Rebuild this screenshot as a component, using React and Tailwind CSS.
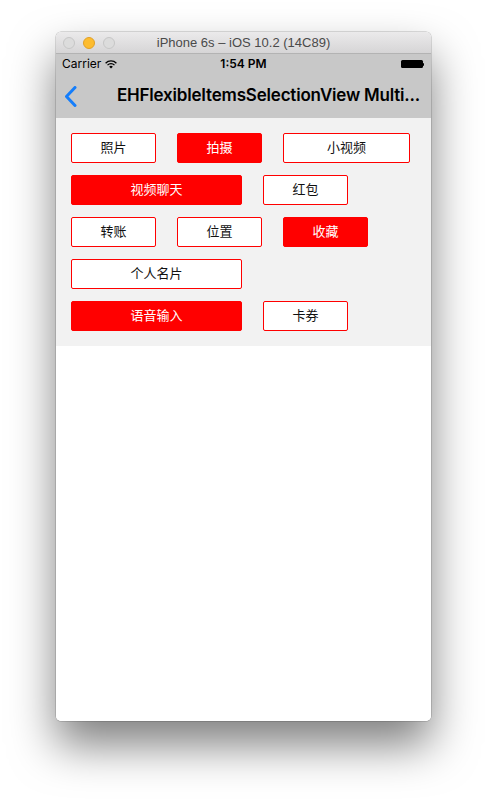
const rows = [
  [
    { label: "照片", w: "w-[85px]", on: false },
    { label: "拍摄", w: "w-[85px]", on: true },
    { label: "小视频", w: "w-[127px]", on: false },
  ],
  [
    { label: "视频聊天", w: "w-[171px]", on: true },
    { label: "红包", w: "w-[85px]", on: false },
  ],
  [
    { label: "转账", w: "w-[85px]", on: false },
    { label: "位置", w: "w-[85px]", on: false },
    { label: "收藏", w: "w-[85px]", on: true },
  ],
  [{ label: "个人名片", w: "w-[171px]", on: false }],
  [
    { label: "语音输入", w: "w-[171px]", on: true },
    { label: "卡券", w: "w-[85px]", on: false },
  ],
];

const Wifi = () => (
  <svg width="12" height="9" viewBox="0 0 12 9" className="ml-[4px]">
    <path d="M0.6 3.2 A7.6 7.6 0 0 1 11.4 3.2" stroke="#000" strokeWidth="1.3" fill="none" />
    <path d="M2.5 5.1 A4.9 4.9 0 0 1 9.5 5.1" stroke="#000" strokeWidth="1.3" fill="none" />
    <path d="M6 8.6 L4.2 6.8 A2.5 2.5 0 0 1 7.8 6.8 Z" fill="#000" />
  </svg>
);

const Battery = () => (
  <div className="flex items-center">
    <div className="w-[22px] h-[8px] rounded-[1.5px] bg-black" />
    <div className="w-[1.5px] h-[3px] bg-black rounded-r-[1px]" />
  </div>
);

const ItemButton = ({ label, w, on }) => (
  <div
    className={`${w} h-[30px] rounded-[2px] border border-[#ff0000] flex items-center justify-center text-[13px] ${
      on ? "bg-[#ff0000] text-white" : "bg-white text-[#111]"
    }`}
  >
    {label}
  </div>
);

export default function App() {
  return (
    <div className="w-full h-[801px] bg-white flex justify-center pt-[32px] font-['Inter','Noto_Sans_CJK_SC',sans-serif]">
      <div className="w-[375px] h-[689px] rounded-[5px] overflow-hidden bg-white flex flex-col shadow-[0_0_0_0.5px_rgba(0,0,0,0.25),0_24px_45px_rgba(0,0,0,0.5)]">
        {/* mac title bar */}
        <div className="h-[22px] relative flex items-center justify-center bg-gradient-to-b from-[#ebeaeb] to-[#d6d5d6] border-b border-[#b3b3b3]">
          <div className="absolute left-[7px] top-[5px] flex gap-[8px]">
            <span className="w-[12px] h-[12px] rounded-full bg-[#dcdcdc] border border-[#c6c6c6]" />
            <span className="w-[12px] h-[12px] rounded-full bg-[#fdbc2f] border border-[#e0a027]" />
            <span className="w-[12px] h-[12px] rounded-full bg-[#dcdcdc] border border-[#c6c6c6]" />
          </div>
          <span className="text-[13px] text-[#4a4a4a] font-['Liberation_Sans',sans-serif]">
            iPhone 6s – iOS 10.2 (14C89)
          </span>
        </div>

        {/* status bar */}
        <div className="h-[20px] bg-[#c8c8c8] relative flex items-center px-[6px] text-[12px] text-black">
          <div className="flex items-center">
            <span>Carrier</span>
            <Wifi />
          </div>
          <span className="absolute left-0 right-0 text-center font-semibold">1:54 PM</span>
          <div className="ml-auto pr-[1px]">
            <Battery />
          </div>
        </div>

        {/* nav bar */}
        <div className="h-[44px] bg-[#c8c8c8] flex items-center">
          <svg width="13" height="21" viewBox="0 0 13 21" className="ml-[8px]">
            <path d="M11 1.5 L2.5 10.5 L11 19.5" stroke="#157efb" strokeWidth="3" fill="none" strokeLinecap="round" strokeLinejoin="round" />
          </svg>
          <span className="ml-[40px] text-[17px] font-semibold text-black whitespace-nowrap tracking-[-0.2px]">
            EHFlexibleItemsSelectionView Multi...
          </span>
        </div>

        {/* items */}
        <div className="bg-[#f2f2f2] px-[15px] py-[15px] flex flex-col gap-[12px]">
          {rows.map((row, i) => (
            <div key={i} className="flex gap-[21px]">
              {row.map((item) => (
                <ItemButton key={item.label} {...item} />
              ))}
            </div>
          ))}
        </div>

        <div className="flex-1 bg-white" />
      </div>
    </div>
  );
}
